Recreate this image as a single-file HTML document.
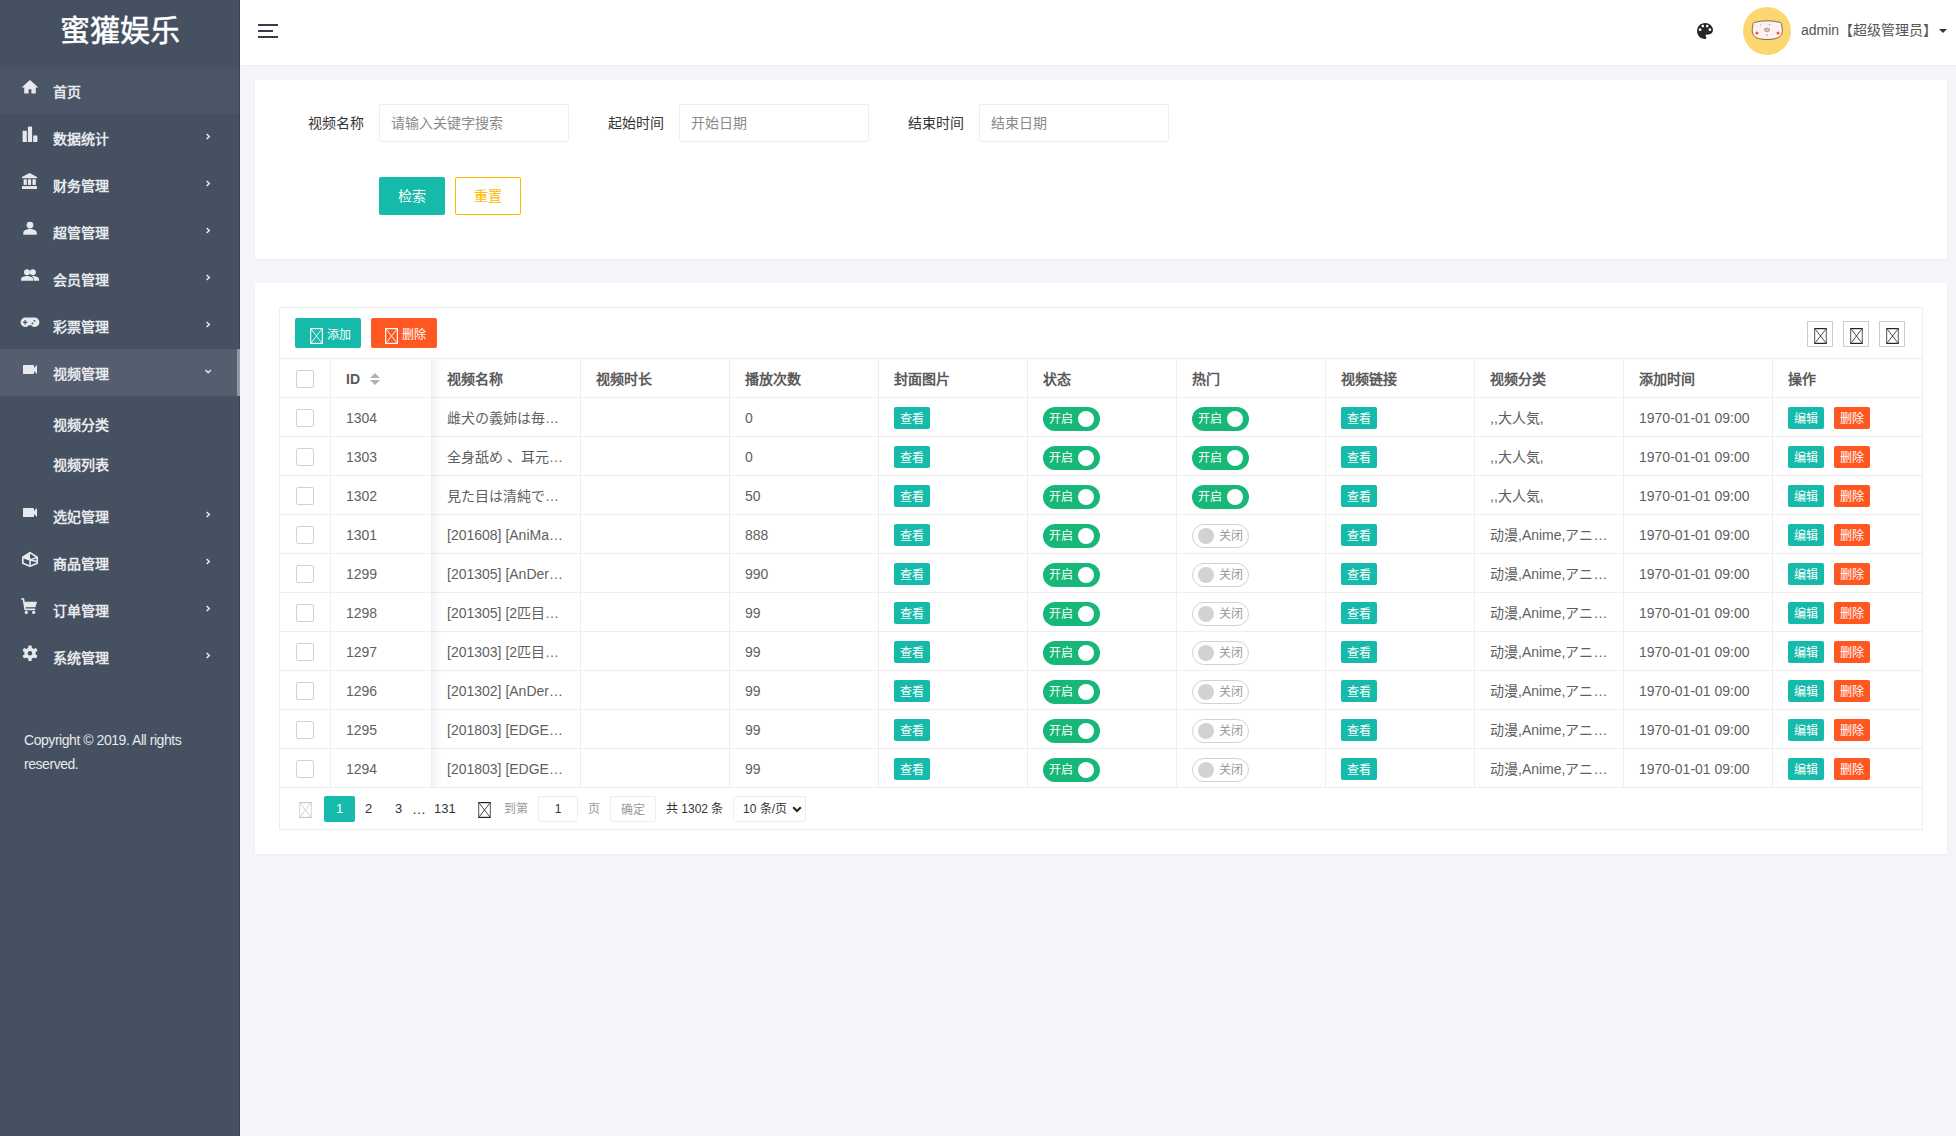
<!DOCTYPE html>
<html lang="zh-CN">
<head>
<meta charset="utf-8">
<title>蜜獾娱乐</title>
<style>
*{box-sizing:border-box;margin:0;padding:0}
html,body{width:1956px;height:1136px;overflow:hidden}
body{font-family:"Liberation Sans",sans-serif;font-size:14px;color:#5f5f5f;background:#f4f5f9;position:relative}
#side{position:absolute;left:0;top:0;width:240px;height:1136px;background:#455061;color:#e6e8eb;z-index:2}
#edge{position:absolute;left:239px;top:0;width:1px;height:1136px;background:#3a4453;z-index:1}
#edge2{position:absolute;left:240px;top:65px;width:1px;height:1071px;background:#f8f8fb;z-index:3}
#logo{position:absolute;left:0;top:0;width:240px;height:66px;background:#455061;color:#fff;font-size:30px;text-align:center;line-height:62px;-webkit-text-stroke:0.5px #fff}
.mi{position:absolute;left:0;width:240px;height:47px;font-weight:bold;font-size:14px;color:#e8e9ec}
.mi.home{background:#4a5567}
.mi.act{background:#545e6e;z-index:2}
.mi.act:after{content:"";position:absolute;right:0;top:0;width:3px;height:47px;background:#9299a3}
.mi .t{position:absolute;left:53px;top:2px;line-height:47px}
.mi .ic{position:absolute;left:0;top:0;width:40px;height:47px}
.mi .ic svg{display:block}
.mi .ar{position:absolute;left:0;top:0;width:240px;height:47px}
.mi .ar svg,.mi .ard svg{display:block}
.mi .ard{position:absolute;left:0;top:0;width:240px;height:47px}
.sub{position:absolute;left:53px;height:40px;line-height:42px;font-weight:bold;color:#e8e9ec}
#copy{position:absolute;left:24px;top:728px;line-height:24px;color:#e8e9ec;font-size:14px;letter-spacing:-0.45px}
#hdr{position:absolute;left:240px;top:0;width:1716px;height:65px;background:#fff;box-shadow:0 1px 0 #eceef2}
.card{position:absolute;left:255px;width:1692px;background:#fff;box-shadow:0 1px 2px rgba(0,0,0,.05)}
.lbl{position:absolute;top:104px;height:38px;line-height:38px;color:#333}
.inp{position:absolute;top:104px;width:190px;height:38px;border:1px solid #eee;border-radius:2px;line-height:36px;padding-left:11px;color:#8a8a8a}
.btn{position:absolute;top:177px;width:66px;height:38px;line-height:38px;text-align:center;border-radius:2px}
#tbox{position:absolute;left:279px;top:307px;width:1644px;height:523px;border:1px solid #eee;background:#fff}
.hl{position:absolute;height:1px;background:#eee}
.vl{position:absolute;width:1px;background:#eee}
.c{position:absolute;height:39px;line-height:39px;white-space:nowrap}
.th{font-weight:bold;color:#5a5a5a}
.cb{position:absolute;width:18px;height:18px;border:1px solid #d2d2d2;border-radius:2px;background:#fff}
.tag{position:absolute;height:22px;line-height:24px;width:36px;text-align:center;font-size:12px;color:#fff;border-radius:2px}
.g{background:#16baaa}
.r{background:#ff5722}
.sw{position:absolute;height:24px;width:57px;border-radius:12px;font-size:12px}
.sw.on{background:#16b777;color:#fff}
.sw.on .k{position:absolute;left:35px;top:4px;width:16px;height:16px;border-radius:50%;background:#fff}
.sw.on .l{position:absolute;left:6px;top:0;line-height:24px}
.sw.off{border:1px solid #d2d2d2;background:#fff;color:#999}
.sw.off .k{position:absolute;left:5px;top:3px;width:16px;height:16px;border-radius:50%;background:#d2d2d2}
.sw.off .l{position:absolute;left:26px;top:0;line-height:22px}
.tool{position:absolute;top:14px;width:26px;height:26px;border:1px solid #ccc;background:#fff}
.tool svg{position:absolute;left:6px;top:6px}
.pg{position:absolute;top:489px;line-height:26px;height:26px;font-size:14px}

</style>
</head>
<body>
<div id="side">
<div id="logo">蜜獾娱乐</div>
<div id="edge"></div>
<div class="mi home" style="top:67px"><span class="ic"><svg width="40" height="47" viewBox="0 0 40 47"><path d="M30 13 L21.6 20.6 H24.2 V26.6 H28.6 V22.2 H31.4 V26.6 H35.8 V20.6 H38.4 Z" fill="#e8e9ec"/></svg></span><span class="t">首页</span></div>
<div class="mi" style="top:114px"><span class="ic"><svg width="40" height="47" viewBox="0 0 40 47"><rect x="22.6" y="16.8" width="4.2" height="11.2" fill="#e8e9ec"/><rect x="27.9" y="12.6" width="4.2" height="15.4" fill="#e8e9ec"/><rect x="33.2" y="21.5" width="4.2" height="6.5" fill="#e8e9ec"/></svg></span><span class="t">数据统计</span><span class="ar"><svg width="240" height="47" viewBox="0 0 240 47"><path d="M206.6 20 L209.3 22.5 L206.6 25" fill="none" stroke="#e8e9ec" stroke-width="1.5"/></svg></span></div>
<div class="mi" style="top:161px"><span class="ic"><svg width="40" height="47" viewBox="0 0 40 47"><path d="M29.5 12 L22 16 V17.2 H37 V16 Z" fill="#e8e9ec"/><rect x="23.6" y="18.3" width="3.2" height="5.6" fill="#e8e9ec"/><rect x="27.9" y="18.3" width="3.2" height="5.6" fill="#e8e9ec"/><rect x="32.5" y="18.3" width="3.3" height="5.6" fill="#e8e9ec"/><rect x="22" y="25.1" width="15" height="2.9" fill="#e8e9ec"/></svg></span><span class="t">财务管理</span><span class="ar"><svg width="240" height="47" viewBox="0 0 240 47"><path d="M206.6 20 L209.3 22.5 L206.6 25" fill="none" stroke="#e8e9ec" stroke-width="1.5"/></svg></span></div>
<div class="mi" style="top:208px"><span class="ic"><svg width="40" height="47" viewBox="0 0 40 47"><circle cx="30" cy="17.1" r="3.4" fill="#e8e9ec"/><path d="M23.3 26.7 V25 C23.3 22 27 21 30 21 C33 21 36.8 22 36.8 25 V26.7 Z" fill="#e8e9ec"/></svg></span><span class="t">超管管理</span><span class="ar"><svg width="240" height="47" viewBox="0 0 240 47"><path d="M206.6 20 L209.3 22.5 L206.6 25" fill="none" stroke="#e8e9ec" stroke-width="1.5"/></svg></span></div>
<div class="mi" style="top:255px"><span class="ic"><svg width="40" height="47" viewBox="0 0 40 47"><circle cx="27" cy="17.3" r="3" fill="#e8e9ec"/><circle cx="32.8" cy="17.3" r="3" fill="#e8e9ec"/><path d="M21 25.8 V24.3 C21 21.8 24.5 20.9 27 20.9 C29.5 20.9 33 21.8 33 24.3 V25.8 Z" fill="#e8e9ec"/><path d="M33.6 25.8 V24.3 C33.6 23 33 22 32 21.2 C32.3 21 32.6 20.9 33 20.9 C35.5 20.9 39 21.8 39 24.3 V25.8 Z" fill="#e8e9ec"/></svg></span><span class="t">会员管理</span><span class="ar"><svg width="240" height="47" viewBox="0 0 240 47"><path d="M206.6 20 L209.3 22.5 L206.6 25" fill="none" stroke="#e8e9ec" stroke-width="1.5"/></svg></span></div>
<div class="mi" style="top:302px"><span class="ic"><svg width="40" height="47" viewBox="0 0 40 47"><path d="M25.3 15.5 H34.7 A4.75 4.75 0 0 1 34.7 25 C33.2 25 32 24.3 31.3 23.3 H28.7 C28 24.3 26.8 25 25.3 25 A4.75 4.75 0 0 1 25.3 15.5 Z" fill="#e8e9ec"/><rect x="22.8" y="19.7" width="4.6" height="1.2" fill="#455061"/><rect x="24.5" y="18" width="1.2" height="4.6" fill="#455061"/><circle cx="34.5" cy="18.8" r="0.9" fill="#455061"/><circle cx="32.4" cy="21.4" r="0.9" fill="#455061"/></svg></span><span class="t">彩票管理</span><span class="ar"><svg width="240" height="47" viewBox="0 0 240 47"><path d="M206.6 20 L209.3 22.5 L206.6 25" fill="none" stroke="#e8e9ec" stroke-width="1.5"/></svg></span></div>
<div class="mi act" style="top:349px"><span class="ic"><svg width="40" height="47" viewBox="0 0 40 47"><rect x="23" y="16" width="11" height="9" rx="0.6" fill="#e8e9ec"/><path d="M34 19 L37 16 V25 L34 22 Z" fill="#e8e9ec"/></svg></span><span class="t">视频管理</span><span class="ard"><svg width="240" height="47" viewBox="0 0 240 47"><path d="M205.5 21 L208.2 23.7 L210.9 21" fill="none" stroke="#e8e9ec" stroke-width="1.5"/></svg></span></div>
<div class="sub" style="top:404px">视频分类</div>
<div class="sub" style="top:444px">视频列表</div>
<div class="mi" style="top:492px"><span class="ic"><svg width="40" height="47" viewBox="0 0 40 47"><rect x="23" y="16" width="11" height="9" rx="0.6" fill="#e8e9ec"/><path d="M34 19 L37 16 V25 L34 22 Z" fill="#e8e9ec"/></svg></span><span class="t">选妃管理</span><span class="ar"><svg width="240" height="47" viewBox="0 0 240 47"><path d="M206.6 20 L209.3 22.5 L206.6 25" fill="none" stroke="#e8e9ec" stroke-width="1.5"/></svg></span></div>
<div class="mi" style="top:539px"><span class="ic"><svg width="40" height="47" viewBox="0 0 40 47"><path d="M30 13.6 L37.2 18.3 V24.2 L30 27.2 L22.8 24.2 V18.3 Z" fill="none" stroke="#e8e9ec" stroke-width="1.7" stroke-linejoin="round"/><path d="M30 19.5 V27 M23 18.5 L30 21 L37 18.5" fill="none" stroke="#e8e9ec" stroke-width="1.6"/><path d="M30 13.6 L22.8 18.3 L30 21 Z" fill="#e8e9ec"/><path d="M30 21 L37 22.5" stroke="#e8e9ec" stroke-width="1.3"/></svg></span><span class="t">商品管理</span><span class="ar"><svg width="240" height="47" viewBox="0 0 240 47"><path d="M206.6 20 L209.3 22.5 L206.6 25" fill="none" stroke="#e8e9ec" stroke-width="1.5"/></svg></span></div>
<div class="mi" style="top:586px"><span class="ic"><svg width="40" height="47" viewBox="0 0 40 47"><path d="M21.3 13 H23.4 L25.2 23.4 H35.2" fill="none" stroke="#e8e9ec" stroke-width="1.7"/><path d="M24.3 15.8 H37 L35.4 21.2 H25.2 Z" fill="#e8e9ec"/><circle cx="26.3" cy="26.4" r="1.6" fill="#e8e9ec"/><circle cx="33.7" cy="26.4" r="1.6" fill="#e8e9ec"/></svg></span><span class="t">订单管理</span><span class="ar"><svg width="240" height="47" viewBox="0 0 240 47"><path d="M206.6 20 L209.3 22.5 L206.6 25" fill="none" stroke="#e8e9ec" stroke-width="1.5"/></svg></span></div>
<div class="mi" style="top:633px"><span class="ic"><svg width="40" height="47" viewBox="0 0 40 47"><g fill="#e8e9ec"><circle cx="30" cy="20.2" r="5.6"/><rect x="28.3" y="12.4" width="3.4" height="15.6" rx="0.8"/><rect x="28.3" y="12.4" width="3.4" height="15.6" rx="0.8" transform="rotate(60 30 20.2)"/><rect x="28.3" y="12.4" width="3.4" height="15.6" rx="0.8" transform="rotate(120 30 20.2)"/></g><circle cx="30" cy="20.2" r="2.2" fill="#455061"/></svg></span><span class="t">系统管理</span><span class="ar"><svg width="240" height="47" viewBox="0 0 240 47"><path d="M206.6 20 L209.3 22.5 L206.6 25" fill="none" stroke="#e8e9ec" stroke-width="1.5"/></svg></span></div>
<div id="copy">Copyright © 2019. All rights<br>reserved.</div>
</div>
<div id="edge2"></div>
<div id="hdr">
<svg style="position:absolute;left:18px;top:24px" width="20" height="14" viewBox="0 0 20 14"><rect x="0" y="0" width="20" height="2" fill="#393d49"/><rect x="0" y="6" width="15" height="2" fill="#393d49"/><rect x="0" y="12" width="20" height="2" fill="#393d49"/></svg>
<svg style="position:absolute;left:1457px;top:23px" width="16" height="16" viewBox="3 3 18 18"><path fill="#262626" d="M12 3c-4.97 0-9 4.03-9 9s4.03 9 9 9c.83 0 1.5-.67 1.5-1.5 0-.39-.15-.74-.39-1.01-.23-.26-.38-.61-.38-.99 0-.83.67-1.5 1.5-1.5H16c2.76 0 5-2.240 5-5 0-4.42-4.030-8-9-8zm-5.5 9c-.83 0-1.5-.67-1.5-1.5S5.67 9 6.5 9 8 9.67 8 10.5 7.330 12 6.5 12zm3-4C8.67 8 8 7.33 8 6.5S8.67 5 9.5 5s1.5.67 1.5 1.5S10.33 8 9.5 8zm5 0c-.83 0-1.5-.67-1.5-1.5S13.67 5 14.5 5s1.5.67 1.5 1.5S15.33 8 14.5 8zm3 4c-.83 0-1.5-.67-1.5-1.5S16.67 9 17.5 9s1.5.67 1.5 1.5-.67 1.5-1.5 1.5z"/></svg>
<svg style="position:absolute;left:1503px;top:7px" width="48" height="48" viewBox="0 0 48 48">
<circle cx="24" cy="24" r="24" fill="#fcd670"/>
<path d="M11 15.5 Q24 12 37.5 15.5 Q39.5 16.5 38.5 18.5 C40 22 39.5 27 37 29.5 C33 33.5 15 33.5 11.5 29.5 C9 27 8.7 22 10 18.5 Q9 16.5 11 15.5 Z" fill="#fdf0ef" stroke="#4a3a3a" stroke-width="0.7"/>
<ellipse cx="24.1" cy="22.8" rx="2.6" ry="1.6" fill="#f5c2c2" stroke="#5a4040" stroke-width="0.5"/>
<circle cx="13.9" cy="25.9" r="1.5" fill="#f4572e"/>
<circle cx="35" cy="25.9" r="1.5" fill="#f4572e"/>
<rect x="17.2" y="17.3" width="0.6" height="1.2" fill="#777"/>
<rect x="26.1" y="17" width="0.6" height="1.2" fill="#555"/>
<path d="M23.8 27.3 Q24.6 28 24 29" fill="none" stroke="#555" stroke-width="0.6"/>
</svg>
<div style="position:absolute;left:1561px;top:0;line-height:60px;color:#555;font-size:14px;white-space:nowrap">admin【超级管理员】</div>
<svg style="position:absolute;left:1699px;top:29px" width="8" height="4" viewBox="0 0 8 4"><path d="M0 0 H8 L4 4 Z" fill="#333"/></svg>
</div>
<div class="card" style="top:80px;height:179px"></div>
<div class="lbl" style="left:308px">视频名称</div>
<div class="inp" style="left:379px">请输入关键字搜索</div>
<div class="lbl" style="left:608px">起始时间</div>
<div class="inp" style="left:679px">开始日期</div>
<div class="lbl" style="left:908px">结束时间</div>
<div class="inp" style="left:979px">结束日期</div>
<div class="btn" style="left:379px;background:#16baaa;color:#fff">检索</div>
<div class="btn" style="left:455px;border:1px solid #ffb800;color:#ffb800;line-height:36px">重置</div>
<div class="card" style="top:283px;height:571px"></div>
<div id="tbox"></div>
<div class="tag g" style="left:295px;top:318px;width:66px;height:30px;line-height:30px;font-size:12px;text-align:left;padding-left:14px"><svg style="position:absolute;left:15px;top:10px" width="13" height="16" viewBox="0 0 13 16"><rect x="0.6" y="0.6" width="11.8" height="14.8" fill="none" stroke="#fff" stroke-width="1.2"/><path d="M1 1 L12 15 M12 1 L1 15" stroke="#fff" stroke-width="0.9"/></svg><span style="position:absolute;left:32px;top:2px">添加</span></div>
<div class="tag r" style="left:371px;top:318px;width:66px;height:30px;line-height:30px;font-size:12px;text-align:left"><svg style="position:absolute;left:14px;top:10px" width="13" height="16" viewBox="0 0 13 16"><rect x="0.6" y="0.6" width="11.8" height="14.8" fill="none" stroke="#fff" stroke-width="1.2"/><path d="M1 1 L12 15 M12 1 L1 15" stroke="#fff" stroke-width="0.9"/></svg><span style="position:absolute;left:31px;top:2px">删除</span></div>
<div class="tool" style="left:1807px;top:321px"><svg width="13" height="16" viewBox="0 0 13 16"><rect x="0" y="0" width="13" height="1.2" fill="#222"/><rect x="0" y="14.8" width="13" height="1.2" fill="#222"/><rect x="0.2" y="0" width="1" height="16" fill="#555"/><rect x="11.8" y="0" width="1" height="16" fill="#555"/><path d="M1.2 1.2 L11.8 14.8 M11.8 1.2 L1.2 14.8" stroke="#333" stroke-width="0.9"/></svg></div><div class="tool" style="left:1843px;top:321px"><svg width="13" height="16" viewBox="0 0 13 16"><rect x="0" y="0" width="13" height="1.2" fill="#222"/><rect x="0" y="14.8" width="13" height="1.2" fill="#222"/><rect x="0.2" y="0" width="1" height="16" fill="#555"/><rect x="11.8" y="0" width="1" height="16" fill="#555"/><path d="M1.2 1.2 L11.8 14.8 M11.8 1.2 L1.2 14.8" stroke="#333" stroke-width="0.9"/></svg></div><div class="tool" style="left:1879px;top:321px"><svg width="13" height="16" viewBox="0 0 13 16"><rect x="0" y="0" width="13" height="1.2" fill="#222"/><rect x="0" y="14.8" width="13" height="1.2" fill="#222"/><rect x="0.2" y="0" width="1" height="16" fill="#555"/><rect x="11.8" y="0" width="1" height="16" fill="#555"/><path d="M1.2 1.2 L11.8 14.8 M11.8 1.2 L1.2 14.8" stroke="#333" stroke-width="0.9"/></svg></div>
<div class="hl" style="left:279px;top:358px;width:1644px"></div><div class="hl" style="left:279px;top:397px;width:1644px"></div><div class="hl" style="left:279px;top:436px;width:1644px"></div><div class="hl" style="left:279px;top:475px;width:1644px"></div><div class="hl" style="left:279px;top:514px;width:1644px"></div><div class="hl" style="left:279px;top:553px;width:1644px"></div><div class="hl" style="left:279px;top:592px;width:1644px"></div><div class="hl" style="left:279px;top:631px;width:1644px"></div><div class="hl" style="left:279px;top:670px;width:1644px"></div><div class="hl" style="left:279px;top:709px;width:1644px"></div><div class="hl" style="left:279px;top:748px;width:1644px"></div><div class="hl" style="left:279px;top:787px;width:1644px"></div>
<div class="vl" style="left:330px;top:358px;height:430px"></div><div class="vl" style="left:431px;top:358px;height:430px"></div><div class="vl" style="left:580px;top:358px;height:430px"></div><div class="vl" style="left:729px;top:358px;height:430px"></div><div class="vl" style="left:878px;top:358px;height:430px"></div><div class="vl" style="left:1027px;top:358px;height:430px"></div><div class="vl" style="left:1176px;top:358px;height:430px"></div><div class="vl" style="left:1325px;top:358px;height:430px"></div><div class="vl" style="left:1474px;top:358px;height:430px"></div><div class="vl" style="left:1623px;top:358px;height:430px"></div><div class="vl" style="left:1772px;top:358px;height:430px"></div><div style="position:absolute;left:432px;top:359px;width:10px;height:428px;background:linear-gradient(to right,rgba(0,0,0,.045),rgba(0,0,0,0))"></div>
<span class="cb" style="left:296px;top:370px"></span><div class="c th" style="left:346px;top:360px;height:38px;line-height:38px">ID</div><div class="c th" style="left:447px;top:360px;height:38px;line-height:38px">视频名称</div><div class="c th" style="left:596px;top:360px;height:38px;line-height:38px">视频时长</div><div class="c th" style="left:745px;top:360px;height:38px;line-height:38px">播放次数</div><div class="c th" style="left:894px;top:360px;height:38px;line-height:38px">封面图片</div><div class="c th" style="left:1043px;top:360px;height:38px;line-height:38px">状态</div><div class="c th" style="left:1192px;top:360px;height:38px;line-height:38px">热门</div><div class="c th" style="left:1341px;top:360px;height:38px;line-height:38px">视频链接</div><div class="c th" style="left:1490px;top:360px;height:38px;line-height:38px">视频分类</div><div class="c th" style="left:1639px;top:360px;height:38px;line-height:38px">添加时间</div><div class="c th" style="left:1788px;top:360px;height:38px;line-height:38px">操作</div><svg style="position:absolute;left:370px;top:373px" width="10" height="12" viewBox="0 0 10 12"><path d="M5 0 L10 5 H0 Z M0 7 H10 L5 12 Z" fill="#b2b2b2"/></svg>
<span class="cb" style="left:296px;top:409px"></span><div class="c" style="left:346px;top:399px;height:38px;line-height:38px">1304</div><div class="c" style="left:447px;top:399px;height:38px;line-height:38px">雌犬の義姉は毎…</div><div class="c" style="left:745px;top:399px;height:38px;line-height:38px">0</div><span class="tag g" style="left:894px;top:407px">查看</span><span class="sw on" style="left:1043px;top:407px"><span class="l">开启</span><span class="k"></span></span><span class="sw on" style="left:1192px;top:407px"><span class="l">开启</span><span class="k"></span></span><span class="tag g" style="left:1341px;top:407px">查看</span><div class="c" style="left:1490px;top:399px;height:38px;line-height:38px">,,大人気,</div><div class="c" style="left:1639px;top:399px;height:38px;line-height:38px">1970-01-01 09:00</div><span class="tag g" style="left:1788px;top:407px">编辑</span><span class="tag r" style="left:1834px;top:407px">删除</span>
<span class="cb" style="left:296px;top:448px"></span><div class="c" style="left:346px;top:438px;height:38px;line-height:38px">1303</div><div class="c" style="left:447px;top:438px;height:38px;line-height:38px">全身舐め 、耳元…</div><div class="c" style="left:745px;top:438px;height:38px;line-height:38px">0</div><span class="tag g" style="left:894px;top:446px">查看</span><span class="sw on" style="left:1043px;top:446px"><span class="l">开启</span><span class="k"></span></span><span class="sw on" style="left:1192px;top:446px"><span class="l">开启</span><span class="k"></span></span><span class="tag g" style="left:1341px;top:446px">查看</span><div class="c" style="left:1490px;top:438px;height:38px;line-height:38px">,,大人気,</div><div class="c" style="left:1639px;top:438px;height:38px;line-height:38px">1970-01-01 09:00</div><span class="tag g" style="left:1788px;top:446px">编辑</span><span class="tag r" style="left:1834px;top:446px">删除</span>
<span class="cb" style="left:296px;top:487px"></span><div class="c" style="left:346px;top:477px;height:38px;line-height:38px">1302</div><div class="c" style="left:447px;top:477px;height:38px;line-height:38px">見た目は清純で…</div><div class="c" style="left:745px;top:477px;height:38px;line-height:38px">50</div><span class="tag g" style="left:894px;top:485px">查看</span><span class="sw on" style="left:1043px;top:485px"><span class="l">开启</span><span class="k"></span></span><span class="sw on" style="left:1192px;top:485px"><span class="l">开启</span><span class="k"></span></span><span class="tag g" style="left:1341px;top:485px">查看</span><div class="c" style="left:1490px;top:477px;height:38px;line-height:38px">,,大人気,</div><div class="c" style="left:1639px;top:477px;height:38px;line-height:38px">1970-01-01 09:00</div><span class="tag g" style="left:1788px;top:485px">编辑</span><span class="tag r" style="left:1834px;top:485px">删除</span>
<span class="cb" style="left:296px;top:526px"></span><div class="c" style="left:346px;top:516px;height:38px;line-height:38px">1301</div><div class="c" style="left:447px;top:516px;height:38px;line-height:38px">[201608] [AniMa…</div><div class="c" style="left:745px;top:516px;height:38px;line-height:38px">888</div><span class="tag g" style="left:894px;top:524px">查看</span><span class="sw on" style="left:1043px;top:524px"><span class="l">开启</span><span class="k"></span></span><span class="sw off" style="left:1192px;top:524px"><span class="k"></span><span class="l">关闭</span></span><span class="tag g" style="left:1341px;top:524px">查看</span><div class="c" style="left:1490px;top:516px;height:38px;line-height:38px">动漫,Anime,アニ…</div><div class="c" style="left:1639px;top:516px;height:38px;line-height:38px">1970-01-01 09:00</div><span class="tag g" style="left:1788px;top:524px">编辑</span><span class="tag r" style="left:1834px;top:524px">删除</span>
<span class="cb" style="left:296px;top:565px"></span><div class="c" style="left:346px;top:555px;height:38px;line-height:38px">1299</div><div class="c" style="left:447px;top:555px;height:38px;line-height:38px">[201305] [AnDer…</div><div class="c" style="left:745px;top:555px;height:38px;line-height:38px">990</div><span class="tag g" style="left:894px;top:563px">查看</span><span class="sw on" style="left:1043px;top:563px"><span class="l">开启</span><span class="k"></span></span><span class="sw off" style="left:1192px;top:563px"><span class="k"></span><span class="l">关闭</span></span><span class="tag g" style="left:1341px;top:563px">查看</span><div class="c" style="left:1490px;top:555px;height:38px;line-height:38px">动漫,Anime,アニ…</div><div class="c" style="left:1639px;top:555px;height:38px;line-height:38px">1970-01-01 09:00</div><span class="tag g" style="left:1788px;top:563px">编辑</span><span class="tag r" style="left:1834px;top:563px">删除</span>
<span class="cb" style="left:296px;top:604px"></span><div class="c" style="left:346px;top:594px;height:38px;line-height:38px">1298</div><div class="c" style="left:447px;top:594px;height:38px;line-height:38px">[201305] [2匹目…</div><div class="c" style="left:745px;top:594px;height:38px;line-height:38px">99</div><span class="tag g" style="left:894px;top:602px">查看</span><span class="sw on" style="left:1043px;top:602px"><span class="l">开启</span><span class="k"></span></span><span class="sw off" style="left:1192px;top:602px"><span class="k"></span><span class="l">关闭</span></span><span class="tag g" style="left:1341px;top:602px">查看</span><div class="c" style="left:1490px;top:594px;height:38px;line-height:38px">动漫,Anime,アニ…</div><div class="c" style="left:1639px;top:594px;height:38px;line-height:38px">1970-01-01 09:00</div><span class="tag g" style="left:1788px;top:602px">编辑</span><span class="tag r" style="left:1834px;top:602px">删除</span>
<span class="cb" style="left:296px;top:643px"></span><div class="c" style="left:346px;top:633px;height:38px;line-height:38px">1297</div><div class="c" style="left:447px;top:633px;height:38px;line-height:38px">[201303] [2匹目…</div><div class="c" style="left:745px;top:633px;height:38px;line-height:38px">99</div><span class="tag g" style="left:894px;top:641px">查看</span><span class="sw on" style="left:1043px;top:641px"><span class="l">开启</span><span class="k"></span></span><span class="sw off" style="left:1192px;top:641px"><span class="k"></span><span class="l">关闭</span></span><span class="tag g" style="left:1341px;top:641px">查看</span><div class="c" style="left:1490px;top:633px;height:38px;line-height:38px">动漫,Anime,アニ…</div><div class="c" style="left:1639px;top:633px;height:38px;line-height:38px">1970-01-01 09:00</div><span class="tag g" style="left:1788px;top:641px">编辑</span><span class="tag r" style="left:1834px;top:641px">删除</span>
<span class="cb" style="left:296px;top:682px"></span><div class="c" style="left:346px;top:672px;height:38px;line-height:38px">1296</div><div class="c" style="left:447px;top:672px;height:38px;line-height:38px">[201302] [AnDer…</div><div class="c" style="left:745px;top:672px;height:38px;line-height:38px">99</div><span class="tag g" style="left:894px;top:680px">查看</span><span class="sw on" style="left:1043px;top:680px"><span class="l">开启</span><span class="k"></span></span><span class="sw off" style="left:1192px;top:680px"><span class="k"></span><span class="l">关闭</span></span><span class="tag g" style="left:1341px;top:680px">查看</span><div class="c" style="left:1490px;top:672px;height:38px;line-height:38px">动漫,Anime,アニ…</div><div class="c" style="left:1639px;top:672px;height:38px;line-height:38px">1970-01-01 09:00</div><span class="tag g" style="left:1788px;top:680px">编辑</span><span class="tag r" style="left:1834px;top:680px">删除</span>
<span class="cb" style="left:296px;top:721px"></span><div class="c" style="left:346px;top:711px;height:38px;line-height:38px">1295</div><div class="c" style="left:447px;top:711px;height:38px;line-height:38px">[201803] [EDGE…</div><div class="c" style="left:745px;top:711px;height:38px;line-height:38px">99</div><span class="tag g" style="left:894px;top:719px">查看</span><span class="sw on" style="left:1043px;top:719px"><span class="l">开启</span><span class="k"></span></span><span class="sw off" style="left:1192px;top:719px"><span class="k"></span><span class="l">关闭</span></span><span class="tag g" style="left:1341px;top:719px">查看</span><div class="c" style="left:1490px;top:711px;height:38px;line-height:38px">动漫,Anime,アニ…</div><div class="c" style="left:1639px;top:711px;height:38px;line-height:38px">1970-01-01 09:00</div><span class="tag g" style="left:1788px;top:719px">编辑</span><span class="tag r" style="left:1834px;top:719px">删除</span>
<span class="cb" style="left:296px;top:760px"></span><div class="c" style="left:346px;top:750px;height:38px;line-height:38px">1294</div><div class="c" style="left:447px;top:750px;height:38px;line-height:38px">[201803] [EDGE…</div><div class="c" style="left:745px;top:750px;height:38px;line-height:38px">99</div><span class="tag g" style="left:894px;top:758px">查看</span><span class="sw on" style="left:1043px;top:758px"><span class="l">开启</span><span class="k"></span></span><span class="sw off" style="left:1192px;top:758px"><span class="k"></span><span class="l">关闭</span></span><span class="tag g" style="left:1341px;top:758px">查看</span><div class="c" style="left:1490px;top:750px;height:38px;line-height:38px">动漫,Anime,アニ…</div><div class="c" style="left:1639px;top:750px;height:38px;line-height:38px">1970-01-01 09:00</div><span class="tag g" style="left:1788px;top:758px">编辑</span><span class="tag r" style="left:1834px;top:758px">删除</span>
<svg style="position:absolute;left:299px;top:802px" width="13" height="16" viewBox="0 0 13 16"><rect x="0" y="0" width="13" height="1.2" fill="#c8c8c8"/><rect x="0" y="14.8" width="13" height="1.2" fill="#c8c8c8"/><rect x="0.2" y="0" width="1" height="16" fill="#d8d8d8"/><rect x="11.8" y="0" width="1" height="16" fill="#d8d8d8"/><path d="M1.2 1.2 L11.8 14.8 M11.8 1.2 L1.2 14.8" stroke="#ccc" stroke-width="0.9"/></svg>
<div style="position:absolute;left:324px;top:796px;width:31px;height:26px;background:#16baaa;border-radius:2px;color:#fff;text-align:center;line-height:26px;font-size:13px">1</div>
<div class="pg" style="left:365px;top:796px;color:#333;font-size:13px">2</div>
<div class="pg" style="left:395px;top:796px;color:#333;font-size:13px">3</div>
<div class="pg" style="left:412px;top:796px;color:#333">…</div>
<div class="pg" style="left:434px;top:796px;color:#333;font-size:13px">131</div>
<svg style="position:absolute;left:478px;top:802px" width="13" height="16" viewBox="0 0 13 16"><rect x="0" y="0" width="13" height="1.2" fill="#222"/><rect x="0" y="14.8" width="13" height="1.2" fill="#222"/><rect x="0.2" y="0" width="1" height="16" fill="#555"/><rect x="11.8" y="0" width="1" height="16" fill="#555"/><path d="M1.2 1.2 L11.8 14.8 M11.8 1.2 L1.2 14.8" stroke="#333" stroke-width="0.9"/></svg>
<div class="pg" style="left:504px;top:796px;color:#999;font-size:12px">到第</div>
<div style="position:absolute;left:538px;top:796px;width:40px;height:26px;border:1px solid #eee;border-radius:2px;text-align:center;line-height:24px;color:#333;font-size:12px">1</div>
<div class="pg" style="left:588px;top:796px;color:#999;font-size:12px">页</div>
<div style="position:absolute;left:610px;top:796px;width:46px;height:26px;border:1px solid #eee;border-radius:2px;text-align:center;line-height:26px;color:#999;font-size:12px">确定</div>
<div class="pg" style="left:666px;top:796px;color:#333;font-size:12px">共 1302 条</div>
<div style="position:absolute;left:733px;top:796px;width:73px;height:26px;border:1px solid #eee;border-radius:2px;line-height:24px;color:#333;font-size:12px;padding-left:9px">10 条/页<svg style="position:absolute;left:58px;top:9px" width="10" height="7" viewBox="0 0 10 7"><path d="M1.2 1.2 L5 5 L8.8 1.2" fill="none" stroke="#222" stroke-width="2"/></svg></div>
</body>
</html>
